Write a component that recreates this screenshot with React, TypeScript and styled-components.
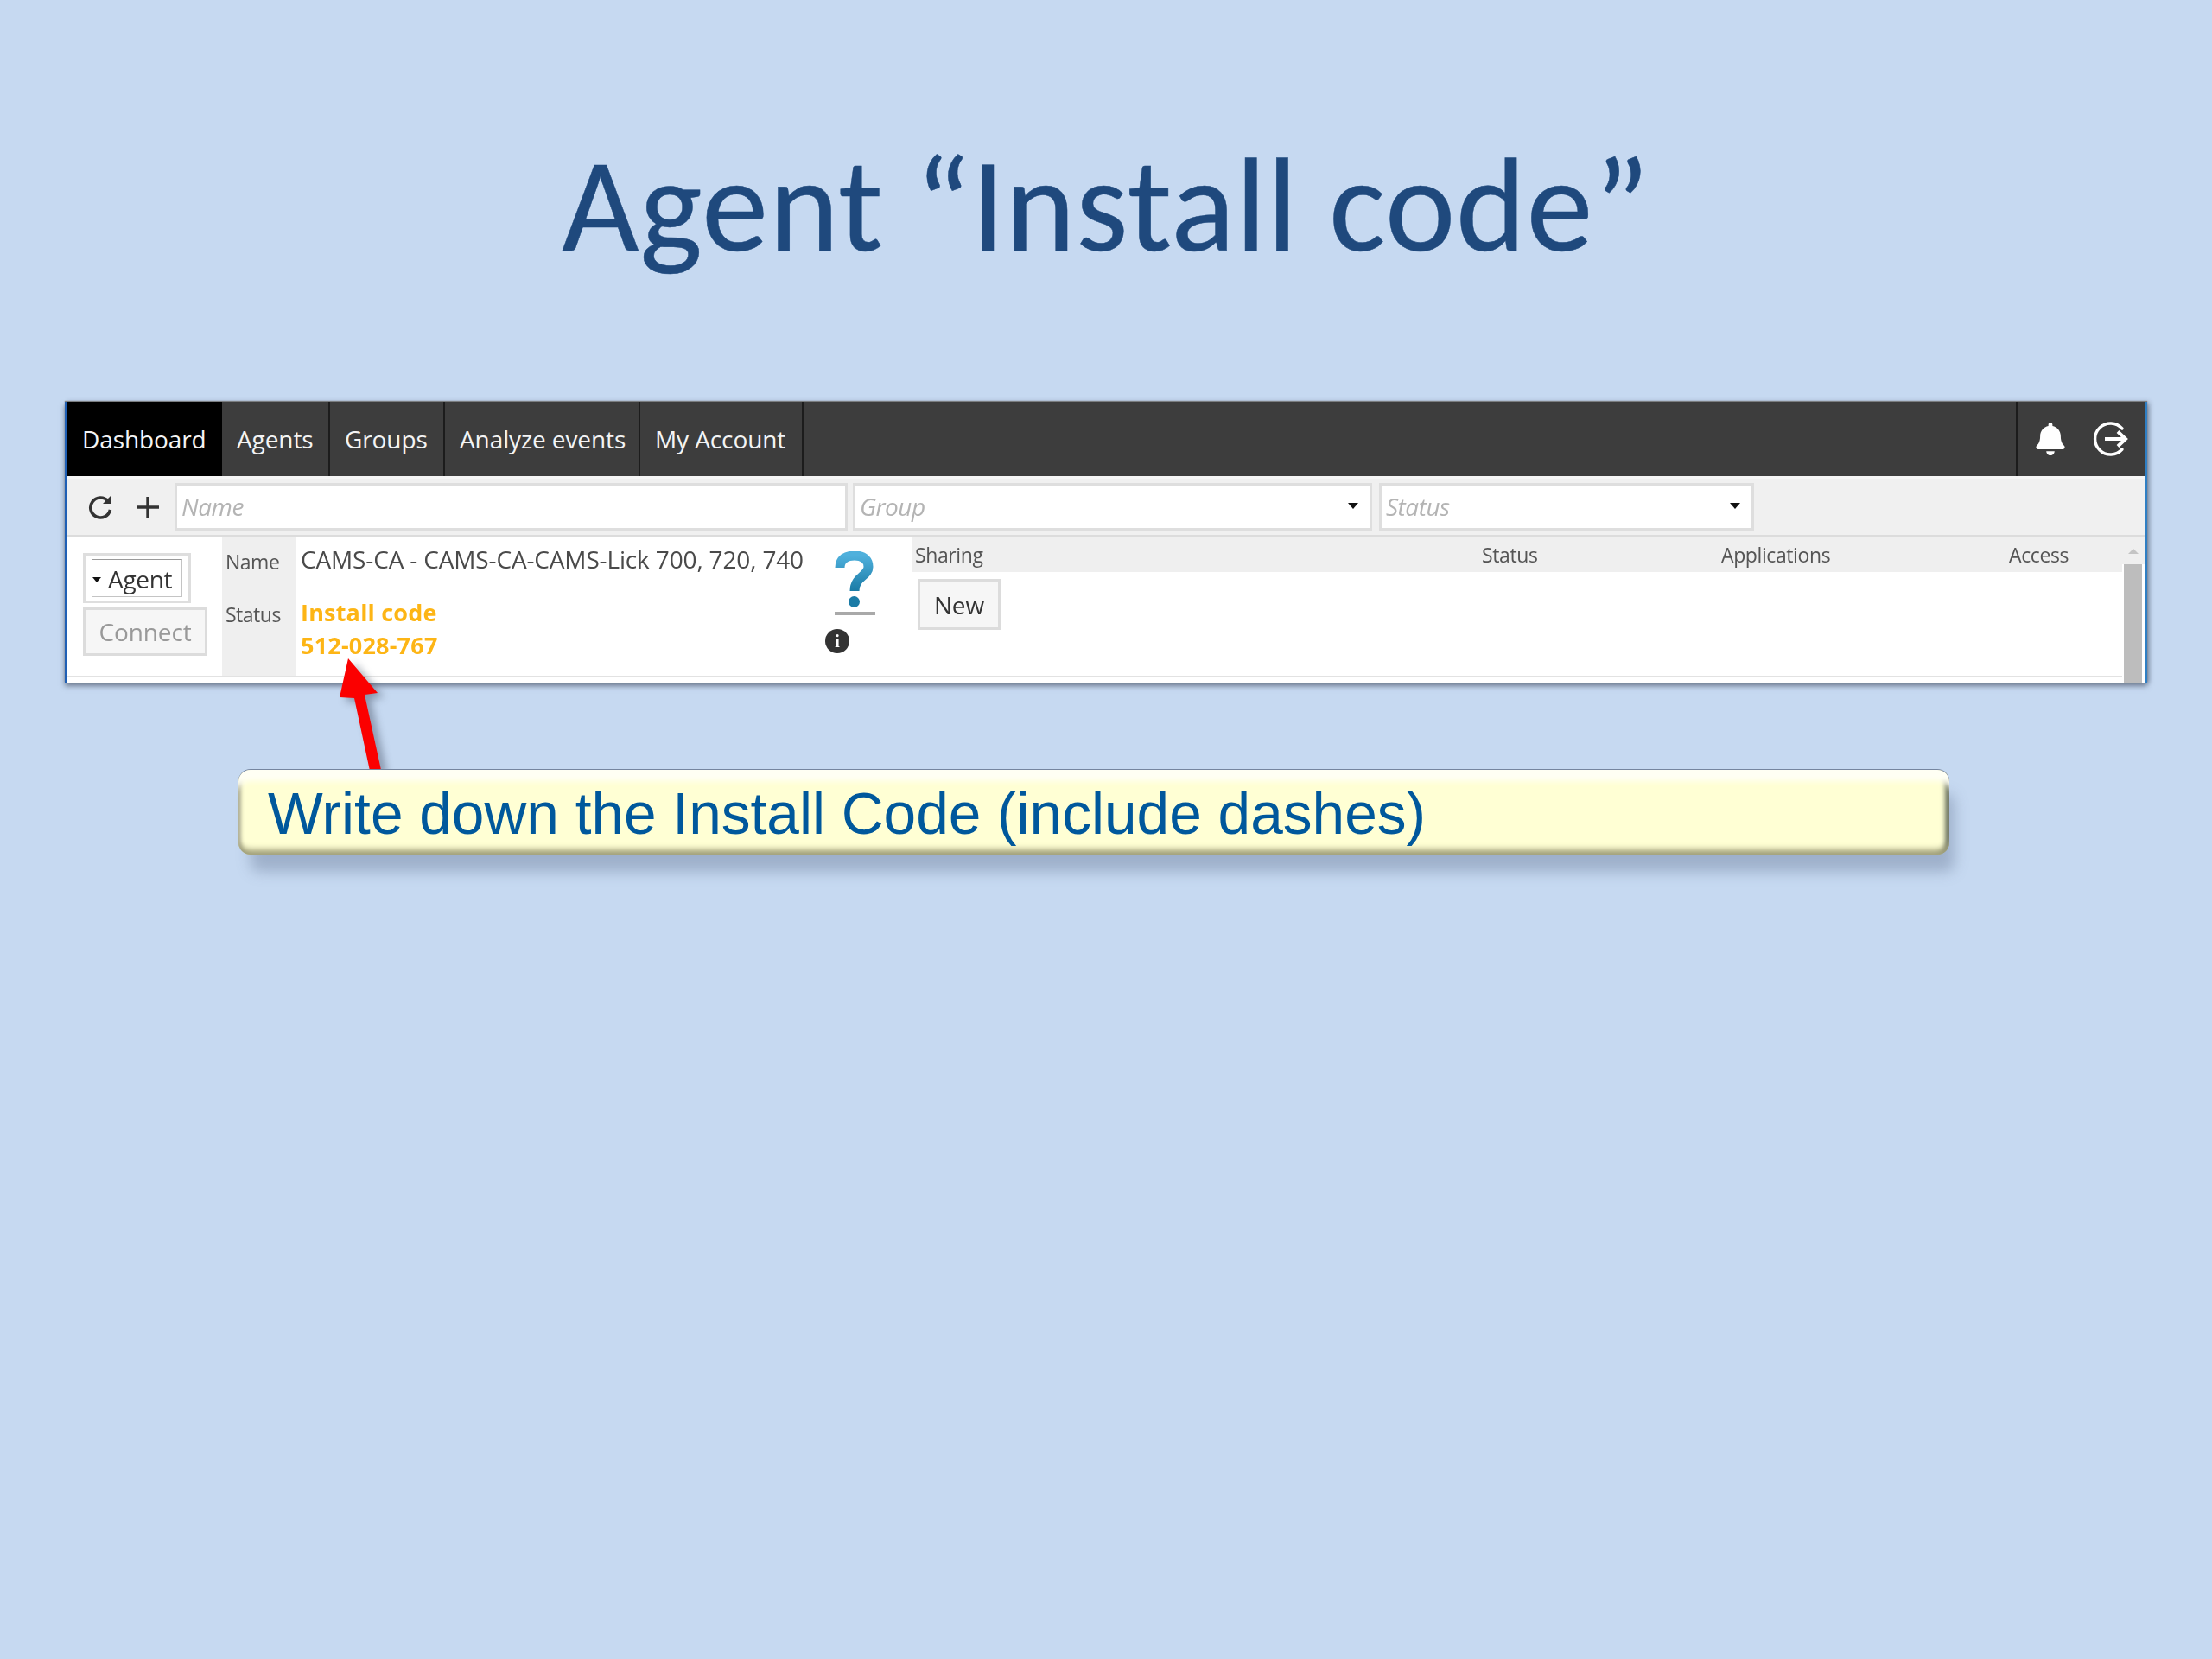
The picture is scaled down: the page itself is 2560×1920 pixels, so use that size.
import React from "react";
import styled, { createGlobalStyle } from "styled-components";
import { FaBell } from "react-icons/fa";

const Global = createGlobalStyle`
  html, body { margin: 0; padding: 0; background: #c6d9f1; }
`;

const Page = styled.div`
  position: relative;
  width: 2560px;
  height: 1920px;
  background: #c6d9f1;
  display: flex;
  flex-direction: column;
  overflow: hidden;
`;

const Title = styled.h1`
  margin: 0;
  height: 465px;
  padding-top: 157px;
  box-sizing: border-box;
  text-align: center;
  font: 400 154px/160px Carlito, Lato, "Open Sans", sans-serif;
  letter-spacing: 0.9px;
  color: #1f497d;
  -webkit-text-stroke: 0.5px #1f497d;
  filter: blur(0.6px);
`;

const Window = styled.div`
  margin-left: 75px;
  width: 2410px;
  height: 325px;
  flex: none;
  box-sizing: border-box;
  border-left: 3px solid #1f5fb4;
  border-right: 3px solid #2f7fc4;
  background: #fff;
  display: flex;
  flex-direction: column;
  box-shadow: 0 4px 6px rgba(60, 70, 90, 0.6), 3px 0 5px rgba(60, 70, 90, 0.3), 0 -1px 1px #8a8a8a;
  font-family: "Open Sans", sans-serif;
  filter: blur(0.7px);
  overflow: hidden;
`;

const Nav = styled.nav`
  height: 86px;
  flex: none;
  display: flex;
  align-items: stretch;
  background: #3d3d3d;
`;

const Tab = styled.div<{ $w: number; $active?: boolean }>`
  width: ${(p) => p.$w}px;
  box-sizing: border-box;
  display: flex;
  align-items: center;
  padding-left: 17px;
  font-size: 28px;
  letter-spacing: -0.1px;
  color: #f4f4f4;
  background: ${(p) => (p.$active ? "#000" : "transparent")};
  border-right: 2px solid ${(p) => (p.$active ? "#000" : "#1c1c1c")};
`;

const NavRight = styled.div`
  margin-left: auto;
  width: 149px;
  box-sizing: border-box;
  border-left: 2px solid #1c1c1c;
  display: flex;
  align-items: center;
  gap: 30px;
  padding-left: 19px;
  color: #fff;
`;

const Toolbar = styled.div`
  height: 71px;
  flex: none;
  box-sizing: border-box;
  background: #f0f0f0;
  border-top: 3px solid #f6f6f6;
  border-bottom: 3px solid #dcdcdc;
  display: flex;
  align-items: center;
  padding-left: 24px;
  color: #333;
`;

const ToolIcon = styled.svg<{ $gap?: number }>`
  flex: none;
  display: block;
  margin-left: ${(p) => p.$gap ?? 0}px;
`;

const Field = styled.div<{ $w: number; $gap: number }>`
  width: ${(p) => p.$w}px;
  margin-left: ${(p) => p.$gap}px;
  height: 55px;
  box-sizing: border-box;
  background: #fff;
  border: 3px solid #dedede;
  display: flex;
  align-items: center;
  justify-content: space-between;
  padding: 0 13px 2px 5px;
  font-style: italic;
  font-size: 28px;
  letter-spacing: -0.5px;
  color: #b4b4b4;
`;

const Caret = styled.span`
  width: 0;
  height: 0;
  border-left: 6px solid transparent;
  border-right: 6px solid transparent;
  border-top: 7px solid #111;
`;

const Body = styled.div`
  flex: 1;
  display: flex;
  min-height: 0;
`;

const ActionCol = styled.div`
  width: 179px;
  flex: none;
  height: 162px;
  box-sizing: border-box;
  padding: 18px 0 0 18px;
  border-bottom: 2px solid #e2e2e2;
`;

const AgentOuter = styled.div`
  width: 125px;
  height: 58px;
  box-sizing: border-box;
  border: 3px solid #dedede;
  padding: 4px 7px;
`;

const AgentInner = styled.div`
  height: 100%;
  box-sizing: border-box;
  border: 1px solid #c4c4c4;
  border-left-color: #8a8a8a;
  border-top-color: #9a9a9a;
  display: flex;
  align-items: center;
  gap: 8px;
  padding-top: 2px;
  font-size: 28px;
  letter-spacing: -0.3px;
  color: #333;
`;

const SmallCaret = styled.span`
  width: 0;
  height: 0;
  margin-top: 2px;
  border-left: 5px solid transparent;
  border-right: 5px solid transparent;
  border-top: 6px solid #111;
`;

const ConnectBtn = styled.div`
  margin-top: 5px;
  width: 144px;
  height: 56px;
  box-sizing: border-box;
  border: 3px solid #dcdcdc;
  background: #f6f6f6;
  display: flex;
  align-items: center;
  justify-content: center;
  font-size: 28px;
  letter-spacing: -0.1px;
  color: #999;
`;

const Labels = styled.div`
  width: 86px;
  flex: none;
  height: 162px;
  box-sizing: border-box;
  background: #efefef;
  border-bottom: 2px solid #e2e2e2;
  padding: 13px 0 0 4px;
  font-size: 23px;
  letter-spacing: -0.5px;
  line-height: 30px;
  color: #555;
  display: flex;
  flex-direction: column;
  gap: 31px;
`;

const Values = styled.div`
  width: 616px;
  flex: none;
  height: 162px;
  box-sizing: border-box;
  padding: 5px 0 0 5px;
  border-bottom: 2px solid #e2e2e2;
  font-size: 28px;
  letter-spacing: -0.15px;
  line-height: 40px;
  color: #4a4a4a;
`;

const Code = styled.div`
  margin-top: 23px;
  font-weight: 700;
  font-size: 27px;
  letter-spacing: 0.2px;
  line-height: 38px;
  color: #fdb515;
`;

const HelpCol = styled.div`
  width: 96px;
  flex: none;
  height: 162px;
  position: relative;
  box-sizing: border-box;
  border-bottom: 2px solid #e2e2e2;
`;

const HelpMark = styled.svg`
  position: absolute;
  left: 7px;
  top: 16px;
`;

const InfoDot = styled.div`
  position: absolute;
  left: -4px;
  top: 106px;
  width: 28px;
  height: 28px;
  border-radius: 50%;
  background: #333;
  color: #fff;
  font: 700 20px/28px "Liberation Serif", serif;
  text-align: center;
`;

const Sharing = styled.div`
  flex: 1;
  height: 162px;
  box-sizing: border-box;
  border-bottom: 2px solid #e2e2e2;
`;

const SharingHead = styled.div`
  height: 40px;
  background: #efefef;
  display: grid;
  grid-template-columns: 656px 277px 333px 1fr;
  align-items: center;
  padding-left: 4px;
  font-size: 23px;
  letter-spacing: -0.4px;
  color: #555;
`;

const NewBtn = styled.div`
  margin: 8px 0 0 7px;
  width: 96px;
  height: 59px;
  box-sizing: border-box;
  border: 3px solid #dcdcdc;
  background: #f6f6f6;
  display: flex;
  align-items: center;
  justify-content: center;
  font-size: 28px;
  letter-spacing: -0.1px;
  color: #333;
`;

const Scrollbar = styled.div`
  width: 26px;
  flex: none;
  box-sizing: border-box;
  padding: 0 3px 0 2px;
  background: linear-gradient(#efefef 31px, #fff 31px);
`;

const ScrollArrow = styled.div`
  height: 31px;
  display: flex;
  align-items: center;
  justify-content: center;
  &::before {
    content: "";
    border-left: 6px solid transparent;
    border-right: 6px solid transparent;
    border-bottom: 6px solid #c4c4c4;
  }
`;

const ScrollThumb = styled.div`
  height: 137px;
  background: #bdbdbd;
`;

const Callout = styled.div`
  margin: 101px 0 0 276px;
  width: 1980px;
  height: 98px;
  flex: none;
  box-sizing: border-box;
  border-radius: 14px;
  background: #ffffd4;
  box-shadow:
    inset 0 16px 6px -3px #fffff4,
    inset 0 -9px 7px -3px #a3a27c,
    inset -7px 0 6px -3px #3f4a3e,
    inset 5px 0 5px -3px #8c8c78,
    0 -1px 0 0 #75859f,
    10px 24px 16px -4px rgba(90, 105, 135, 0.36);
  padding: 3px 0 0 34px;
  display: flex;
  align-items: center;
  font: 400 67.6px/1 "Liberation Sans", Arial, sans-serif;
  color: #00589c;
  filter: blur(0.5px);
`;

const Arrow = styled.svg`
  position: absolute;
  left: 380px;
  top: 755px;
  overflow: visible;
  filter: drop-shadow(7px 5px 5px rgba(60, 70, 90, 0.45));
`;

export default function App() {
  return (
    <Page>
      <Global />
      <Title>Agent “Install code”</Title>
      <Window>
        <Nav>
          <Tab $w={179} $active>Dashboard</Tab>
          <Tab $w={125}>Agents</Tab>
          <Tab $w={133}>Groups</Tab>
          <Tab $w={226}>Analyze events</Tab>
          <Tab $w={189}>My Account</Tab>
          <NavRight>
            <FaBell size={38} />
            <svg width="42" height="42" viewBox="0 0 42 42" fill="none" stroke="#fff" strokeWidth="3.4">
              <path d="M34 9A18 18 0 1 0 34 33" strokeLinecap="round" />
              <path d="M14 21H37M29 12.5L38 21L29 29.5" strokeWidth="4" />
            </svg>
          </NavRight>
        </Nav>
        <Toolbar>
          <ToolIcon width="28" height="30" viewBox="0 0 28 30" fill="none" stroke="#333" strokeWidth="3.6">
            <path d="M23 8A11.5 11.5 0 1 0 25.5 18" />
            <path d="M27 1V11H17" fill="#333" stroke="none" />
          </ToolIcon>
          <ToolIcon $gap={28} width="26" height="24" viewBox="0 0 26 24" fill="none" stroke="#333" strokeWidth="3.4">
            <path d="M13 0V24M0 12H26" />
          </ToolIcon>
          <Field $w={779} $gap={18}>Name</Field>
          <Field $w={601} $gap={6}>Group<Caret /></Field>
          <Field $w={434} $gap={8}>Status<Caret /></Field>
        </Toolbar>
        <Body>
          <ActionCol>
            <AgentOuter>
              <AgentInner><SmallCaret />Agent</AgentInner>
            </AgentOuter>
            <ConnectBtn>Connect</ConnectBtn>
          </ActionCol>
          <Labels>
            <span>Name</span>
            <span>Status</span>
          </Labels>
          <Values>
            CAMS-CA - CAMS-CA-CAMS-Lick 700, 720, 740
            <Code>Install code<br />512-028-767</Code>
          </Values>
          <HelpCol>
            <HelpMark width="48" height="76" viewBox="0 0 48 76" fill="none">
              <defs>
                <linearGradient id="qm" x1="0" y1="0" x2="0" y2="1">
                  <stop offset="0" stopColor="#4fb0dc" />
                  <stop offset="1" stopColor="#1a7ba6" />
                </linearGradient>
              </defs>
              <path d="M6 19C6 9 13 5 23 5C35 5 39 11 39 18C39 29 23 29 23 46" stroke="url(#qm)" strokeWidth="11" />
              <circle cx="22.5" cy="58.5" r="6.5" fill="#1a7ba6" />
              <rect x="0" y="70" width="47" height="4" fill="#a9a9a9" />
            </HelpMark>
            <InfoDot>i</InfoDot>
          </HelpCol>
          <Sharing>
            <SharingHead>
              <span>Sharing</span>
              <span>Status</span>
              <span>Applications</span>
              <span>Access</span>
            </SharingHead>
            <NewBtn>New</NewBtn>
          </Sharing>
          <Scrollbar>
            <ScrollArrow />
            <ScrollThumb />
          </Scrollbar>
        </Body>
      </Window>
      <Arrow width="70" height="140" viewBox="380 755 70 140">
        <path d="M403 762L437 802L422 804L441 891L428 892L410 808L393 807Z" fill="#fb0000" />
      </Arrow>
      <Callout>Write down the Install Code (include dashes)</Callout>
    </Page>
  );
}
